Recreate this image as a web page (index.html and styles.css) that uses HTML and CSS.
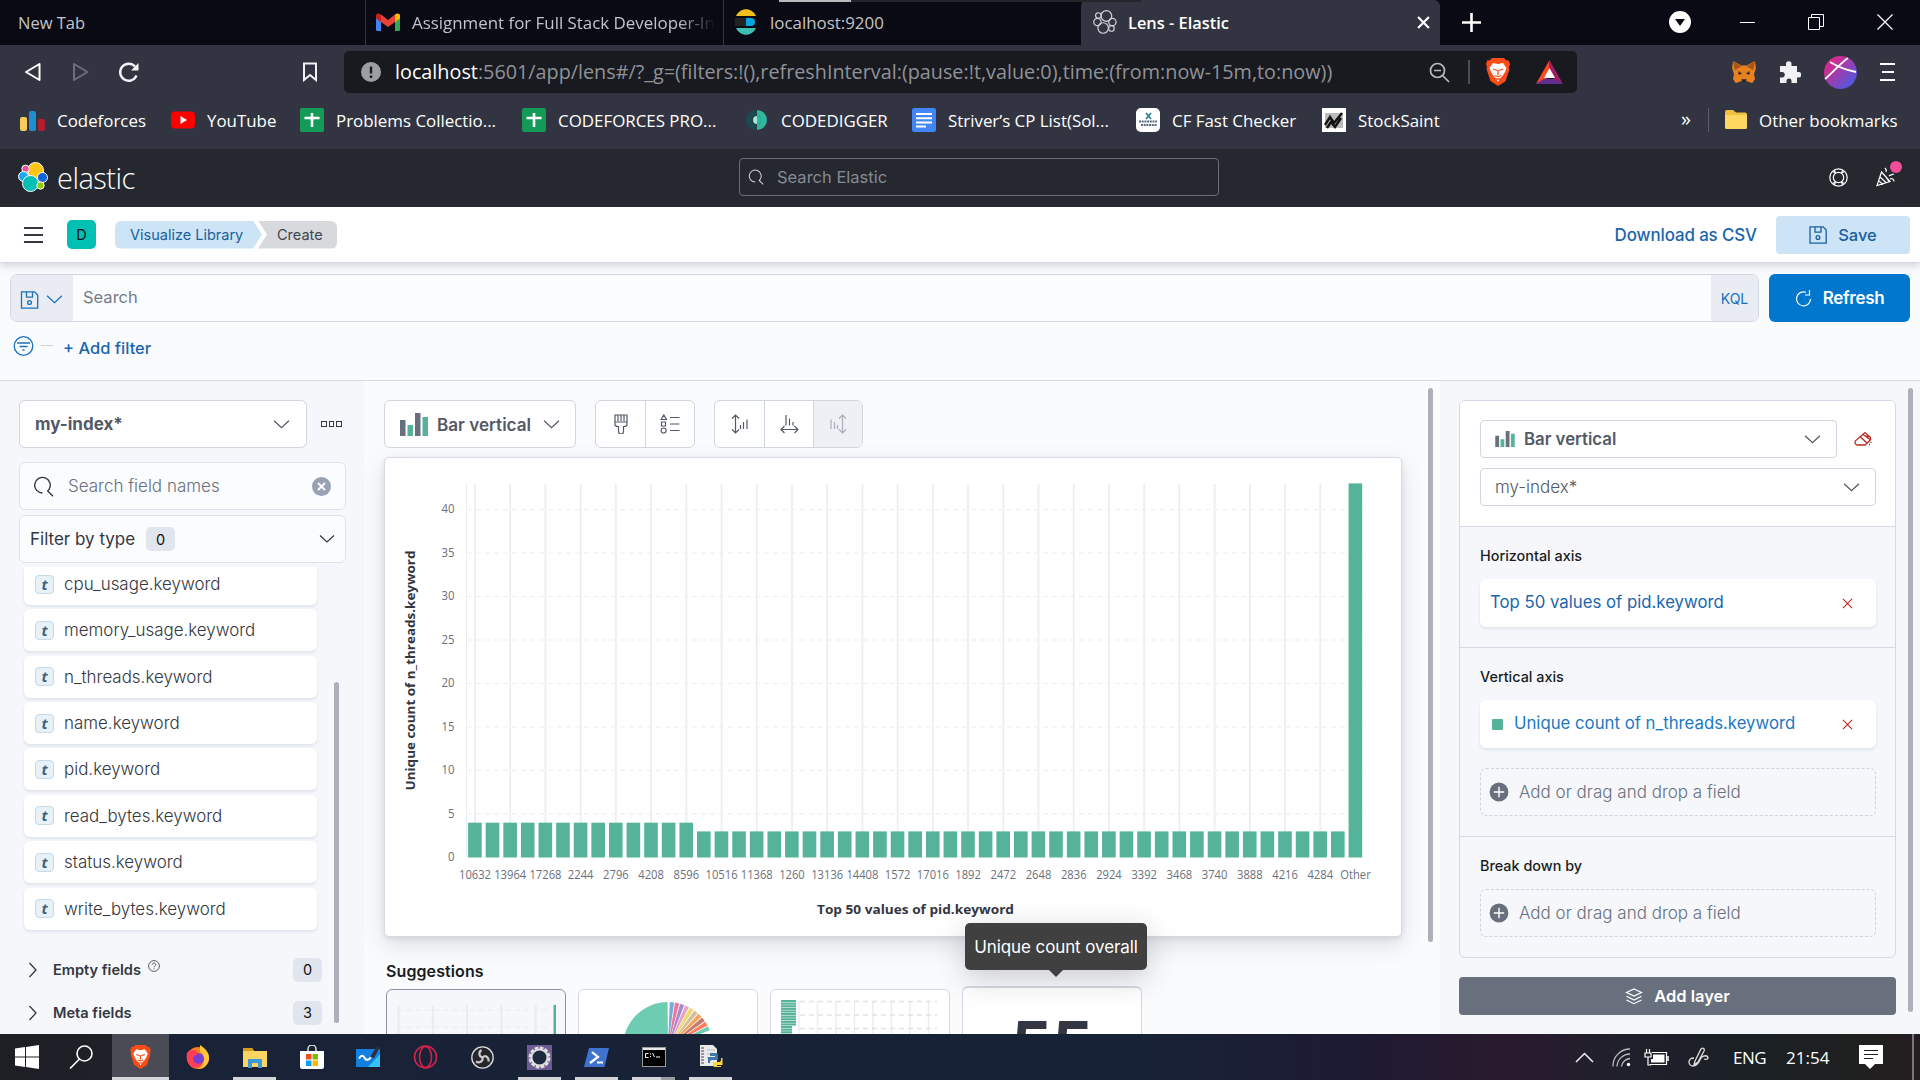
FILE: index.html
```html
<!DOCTYPE html>
<html lang="en">
<head>
<meta charset="utf-8">
<title>Lens - Elastic</title>
<link rel="stylesheet" href="styles.css">
</head>
<body>
<svg class="sprite" width="0" height="0">
  <symbol id="down" viewBox="0 0 16 16"><path d="M1 4.500 8 11l7-6.500" fill="none" stroke="currentColor" stroke-width="1.200"/></symbol>
  <symbol id="mag" viewBox="0 0 20 20"><path d="M9 16.200A7.400 7.400 0 1 1 15.400 12.600L14 14.200l5 5" fill="none" stroke="currentColor" stroke-width="1.300"/></symbol>
  <symbol id="bars" viewBox="0 0 28 23"><path d="M0 7h5.500v16H0zM15 0h5.500v23H15z" fill="#69707d"/><path d="M7.500 12H13v11H7.500zM22.500 4H28v19h-5.500z" fill="#54b399"/></symbol>
  <symbol id="save" viewBox="0 0 18 18"><path d="M1 .8h13.200l3 3.200v13.200H1zM6 1v5.200h6V1" fill="none" stroke="currentColor" stroke-width="1.300"/><circle cx="9" cy="11.500" r="1.900" fill="none" stroke="currentColor" stroke-width="1.300"/></symbol>
  <symbol id="sheet" viewBox="0 0 24 24"><rect width="24" height="24" rx="2" fill="#139a57"/><path d="M12 5v14M4.500 10h15" stroke="#fff" stroke-width="2.600"/></symbol>
  <symbol id="lion" viewBox="0 0 24 28"><path d="m6 0 12 0 2.500 2.500 2-.3 1.500 4-1 3 .5 2-4 12L12 28 4.500 23 .5 11 1 9 0 6l1.500-4 2 .4z" fill="#fb4b16"/><path d="m7 5 5 1 5-1 3.500 5-1.500 4-2.500 4-2.500 2.500L12 24l-2-3.500L7.500 18 5 14l-1.500-4z" fill="#fff"/><path d="m7 11 4 1.500M17 11l-4 1.500M12 12v5M8.500 17.500l3.500 1 3.500-1M10 21h4" stroke="#fb4b16" stroke-width="1.300" fill="none"/></symbol>
  <symbol id="cross" viewBox="0 0 12 12"><path d="m1 1 10 10M11 1 1 11" fill="none" stroke="currentColor" stroke-width="1.200"/></symbol>
  <symbol id="plus" viewBox="0 0 20 20"><circle cx="10" cy="10" r="9.400" fill="#69707d"/><path d="M10 4.800v10.400M4.800 10h10.400" stroke="#fff" stroke-width="1.400"/></symbol>
  <symbol id="right" viewBox="0 0 10 16"><path d="m1.500 1 6.500 7-6.500 7" fill="none" stroke="#343741" stroke-width="1.300"/></symbol>
</svg>

<div class="tabs">
  <div class="tab first">New Tab</div>
  <div class="tab">
    <svg width="24" height="18" viewBox="0 0 24 18"><path d="M0 3v13.500A1.500 1.500 0 0 0 1.500 18H5V6z" fill="#4285f4"/><path d="M24 3v13.500a1.500 1.500 0 0 1-1.500 1.500H19V6z" fill="#34a853"/><path d="M5 1.500 12 7l7-5.500V9l-7 5-7-5z" fill="#ea4335"/><path d="M0 3C0 0 3 0 5 1.500V9L0 5.500z" fill="#c5221f"/><path d="M24 3c0-3-3-3-5-1.500V9l5-3.500z" fill="#fbbc04"/></svg>
    <span class="fade">Assignment for Full Stack Developer-In</span>
  </div>
  <div class="tab plain">
    <svg width="24" height="26" viewBox="0 0 24 26"><path d="M2 7C6-2 18-2 22 7z" fill="#f0bf1a"/><path d="M1 9h15a4 4 0 0 1 0 8H1z" fill="#222"/><path d="M12 9h5a4 4 0 0 1 0 8h-5z" fill="#07a5de"/><path d="M2 19c4 9 16 9 20 0z" fill="#3ebeb0"/></svg>
    <span>localhost:9200</span>
  </div>
  <div class="tab active">
    <svg width="24" height="24" viewBox="0 0 26 26" fill="none" stroke="#cfd2d8" stroke-width="1.300"><circle cx="14.500" cy="6.500" r="5.800"/><circle cx="5.800" cy="6" r="3"/><circle cx="4.800" cy="13" r="4"/><circle cx="21" cy="13" r="4"/><circle cx="11" cy="19.500" r="5.700"/><circle cx="20" cy="20" r="3"/></svg>
    <span>Lens - Elastic</span>
    <svg class="end" width="13" height="13" viewBox="0 0 12 12"><path d="m1 1 10 10M11 1 1 11" stroke="#fff" stroke-width="2"/></svg>
  </div>
  <svg class="newtab" width="19" height="19" viewBox="0 0 19 19"><path d="M9.500 0v19M0 9.500h19" stroke="#fff" stroke-width="2.600"/></svg>
  <div class="winbtns">
    <svg width="22" height="22" viewBox="0 0 22 22"><circle cx="11" cy="11" r="11" fill="#fff"/><path d="M6 8h10l-5 7z" fill="#0a0a14"/></svg>
    <svg width="15" height="15" viewBox="0 0 15 15"><path d="M0 7.500h15" stroke="#fff"/></svg>
    <svg width="16" height="16" viewBox="0 0 16 16" fill="none" stroke="#fff"><path d="M.5 3.500h11v12H.5zM3.500 3.500v-3h12v12h-4"/></svg>
    <svg width="16" height="16" viewBox="0 0 16 16"><path d="m.5.5 15 15M15.500.5l-15 15" stroke="#fff" stroke-width="1.200"/></svg>
  </div>
  <i class="drag"></i>
</div>

<div class="toolbar">
  <svg width="18" height="20" viewBox="0 0 18 20"><path d="M15.500 2v16L2 10z" fill="none" stroke="#fff" stroke-width="2" stroke-linejoin="round"/></svg>
  <svg width="18" height="20" viewBox="0 0 18 20"><path d="M2 2v16l13.500-8z" fill="none" stroke="#6c6f79" stroke-width="2" stroke-linejoin="round"/></svg>
  <svg width="21" height="21" viewBox="0 0 21 21"><path d="M18.500 13.500A8.500 8.500 0 1 1 17 4.500" fill="none" stroke="#f3f3f5" stroke-width="2.400"/><path d="M20.500 1v7.500H13z" fill="#f3f3f5"/></svg>
  <svg width="16" height="20" viewBox="0 0 16 20"><path d="M2 1.500h12v16.500l-6-5-6 5z" fill="none" stroke="#f3f3f5" stroke-width="2"/></svg>
  <div class="url">
    <svg width="20" height="20" viewBox="0 0 20 20"><circle cx="10" cy="10" r="10" fill="#9c9ea5"/><path d="M10 4.500v7M10 13.500v2.500" stroke="#181a20" stroke-width="2.400"/></svg>
    <span class="addr"><b>localhost</b>:5601/app/lens#/?_g=(filters:!(),refreshInterval:(pause:!t,value:0),time:(from:now-15m,to:now))</span>
    <svg width="21" height="21" viewBox="0 0 21 21" fill="none" stroke="#b9bbc0" stroke-width="1.700"><circle cx="8.500" cy="8.500" r="7"/><path d="m13.500 13.500 6.500 6.500M5 8.500h7"/></svg>
    <i class="vbar"></i>
    <svg width="24" height="28"><use href="#lion"/></svg>
    <svg width="27" height="24" viewBox="0 0 27 24"><path d="M13.500 0 0 24l13.500-7z" fill="#ff4724"/><path d="M13.500 0 27 24l-13.500-8z" fill="#9e1f63"/><path d="M0 24h27l-7.500-5h-12z" fill="#662d91"/><path d="m13.500 8 5.500 10H8z" fill="#fff"/></svg>
  </div>
  <div class="exts">
    <svg width="24" height="22" viewBox="0 0 26 24"><path d="m1 0 9 5h6l9-5 1 8-2 6 1 6-3 4-6-2h-6l-6 2-3-4 1-6-2-6z" fill="#e8821e"/><path d="m1 0 9 6-7 4zM25 0l-9 6 7 4z" fill="#a8541a"/><path d="m7 11 4 3-4 1zM19 11l-4 3 4 1zM10 20h6l-1 3h-4z" fill="#2a2a2e"/></svg>
    <svg width="22" height="23" viewBox="0 0 22 23"><path d="M1 5h6V3a2.700 2.700 0 0 1 5.500 0v2H18v6h1.500a2.700 2.700 0 0 1 0 5.500H18V22h-5.500v-2a2.500 2.500 0 0 0-5 0v2H1v-5.500h2a2.700 2.700 0 0 0 0-5.500H1z" fill="#f1f1f3"/></svg>
    <svg width="33" height="33" viewBox="0 0 33 33"><defs><linearGradient id="av" x1="0" y1="0" x2="1" y2="1"><stop offset=".2" stop-color="#d52a8d"/><stop offset=".8" stop-color="#5a55d8"/></linearGradient></defs><circle cx="16.500" cy="16.500" r="16.500" fill="url(#av)"/><path d="M1 23C9 16 18 6 24 2M6 6c8 5 16 8 26 10" fill="none" stroke="#fff" stroke-width="1.800"/></svg>
    <svg width="15" height="20" viewBox="0 0 15 20"><path d="M0 2h15M2 10h12M0 18h15" stroke="#fff" stroke-width="2.200"/></svg>
  </div>
</div>

<div class="bookmarks">
  <div><svg width="25" height="24" viewBox="0 0 25 24"><rect y="9" width="7" height="14" rx="2" fill="#f7c95a"/><rect x="9" y="3" width="7" height="20" rx="2" fill="#1f8fd0" /><rect x="18" y="11" width="7" height="12" rx="2" fill="#b21f2d"/></svg>Codeforces</div>
  <div><svg width="24" height="24" viewBox="0 0 24 24"><rect y="3.500" width="24" height="17" rx="4" fill="#f00"/><path d="m9.500 8 6.500 4-6.500 4z" fill="#fff"/></svg>YouTube</div>
  <div><svg width="24" height="24"><use href="#sheet"/></svg>Problems Collectio...</div>
  <div><svg width="24" height="24"><use href="#sheet"/></svg>CODEFORCES PRO...</div>
  <div><svg width="24" height="24" viewBox="0 0 24 24"><path d="M11 2a10 10 0 0 0 0 20V16a4 4 0 0 1 0-8z" fill="#1a4a52"/><path d="M12 2a10 10 0 0 1 0 20V16a4 4 0 0 0 0-8z" fill="#2fb8a0"/><path d="M12 8a4 4 0 0 0 0 8z" fill="#9fe8dc"/><path d="M12 8a4 4 0 0 1 0 8z" fill="#2fb8a0"/></svg>CODEDIGGER</div>
  <div><svg width="24" height="24" viewBox="0 0 24 24"><rect width="24" height="24" rx="2" fill="#4285f4"/><path d="M4 6h16M4 10.200h16M4 14.400h16M4 18.600h10" stroke="#fff" stroke-width="2"/></svg>Striver’s CP List(Sol...</div>
  <div><svg width="24" height="24" viewBox="0 0 24 24"><rect width="24" height="24" rx="5" fill="#fff"/><path d="m10 5 5 6M15 5l-5 6" stroke="#33818f" stroke-width="1.800"/><path d="M3 13.500h18M5 17h16" stroke="#566a80" stroke-width="1.800" stroke-dasharray="2 .7"/></svg>CF Fast Checker</div>
  <div><svg width="24" height="24" viewBox="0 0 24 24"><rect width="24" height="24" fill="#fff"/><path d="M3 5h18v15H3z" fill="#bbb"/><path d="m3 17 5-8 4 6 8-10M5 20l4-6 4 5 6-9" fill="none" stroke="#111" stroke-width="2.400"/></svg>StockSaint</div>
  <div class="more">»</div>
  <div class="other"><svg width="24" height="20" viewBox="0 0 24 20"><path d="M1 2a2 2 0 0 1 2-2h6l3 2.500h9a2 2 0 0 1 2 2V17a2 2 0 0 1-2 2H3a2 2 0 0 1-2-2z" fill="#f2c23e"/><path d="M1 5h22v12a2 2 0 0 1-2 2H3a2 2 0 0 1-2-2z" fill="#ffd761"/></svg>Other bookmarks</div>
</div>

<header class="ehead">
  <svg width="30" height="30" viewBox="0 0 30 30" stroke="#fff" stroke-width="1"><circle cx="17.500" cy="8.500" r="8" fill="#fec514"/><circle cx="7.500" cy="6.800" r="3.700" fill="#f04e98"/><circle cx="5.500" cy="14.500" r="5" fill="#1ba9f5"/><circle cx="24.500" cy="15.500" r="5" fill="#0b64dd"/><circle cx="12.500" cy="21.500" r="8" fill="#00bfb3"/><circle cx="22.500" cy="23.500" r="3.700" fill="#93c90e"/></svg>
  <span class="brand">elastic</span>
  <div class="gsearch"><svg width="16" height="16"><use href="#mag"/></svg>Search Elastic</div>
  <svg class="help" width="19" height="19" viewBox="0 0 19 19" fill="none" stroke="#fff" stroke-width="1.200"><circle cx="9.500" cy="9.500" r="8.700"/><circle cx="9.500" cy="9.500" r="5.200"/><path d="M3.500 3.500 6.500 5M5.500 2l1 3.500M15.500 3.500 12.500 5M13.500 2l-1 3.500M3.500 15.500l3-1.500M5.500 17l1-3.500M15.500 15.500l-3-1.500M13.500 17l-1-3.500"/></svg>
  <div class="news"><svg width="20" height="20" viewBox="0 0 20 20" fill="none" stroke="#fff" stroke-width="1.200"><path d="M5.500 5 1 18.500 14 14.500zM4 10l6.500 6M3 14l4 3.500M8 7.500l5 7M10 5c1-2 0-3-1-4M13 9c2-2 3-1 5-2M14 12c2-1 4 0 4 2.500"/></svg><i></i></div>
</header>

<nav class="enav">
  <div class="burger"><i></i><i></i><i></i></div>
  <div class="space">D</div>
  <div class="crumbs"><span class="c1">Visualize Library</span><span class="c2">Create</span></div>
  <a class="csv">Download as CSV</a>
  <div class="savebtn"><svg width="18" height="18"><use href="#save"/></svg>Save</div>
</nav>

<section class="query">
  <div class="qrow">
    <div class="qbox">
      <div class="qpre"><svg width="19" height="18"><use href="#save"/></svg><svg width="17" height="17"><use href="#down"/></svg></div>
      <div class="qin">Search</div>
      <div class="kql">KQL</div>
    </div>
    <div class="refresh"><svg width="17" height="17" viewBox="0 0 17 17" fill="none" stroke="#fff" stroke-width="1.200"><path d="M15.500 9A7 7 0 1 1 11 2.300M14.500 0v5H10"/></svg>Refresh</div>
  </div>
  <div class="frow">
    <svg width="21" height="20" viewBox="0 0 21 20" fill="none" stroke="#1a70b8" stroke-width="1.300"><circle cx="10.500" cy="10" r="9.300"/><path d="M4 7h13M6.500 10.500h8M9.500 14h2"/></svg>
    <i></i><a>+ Add filter</a>
  </div>
</section>

<main class="lens">
  <aside class="left">
    <div class="lrow"><div class="lsel"><b>my-index*</b><svg width="17" height="17"><use href="#down"/></svg></div>
      <div class="dots"><i></i><i></i><i></i></div></div>
    <div class="box fsearch"><svg width="21" height="21"><use href="#mag"/></svg><span>Search field names</span><i class="clr"><svg width="9" height="9" viewBox="0 0 9 9"><path d="m1 1 7 7M8 1 1 8" stroke="#fff" stroke-width="2"/></svg></i></div>
    <div class="box ftype"><span>Filter by type</span><em class="badge">0</em><svg width="16" height="16"><use href="#down"/></svg></div>
    <div class="flist">
      <div class="fields">
        <div class="field"><i>t</i>cpu_usage.keyword</div>
        <div class="field"><i>t</i>memory_usage.keyword</div>
        <div class="field"><i>t</i>n_threads.keyword</div>
        <div class="field"><i>t</i>name.keyword</div>
        <div class="field"><i>t</i>pid.keyword</div>
        <div class="field"><i>t</i>read_bytes.keyword</div>
        <div class="field"><i>t</i>status.keyword</div>
        <div class="field"><i>t</i>write_bytes.keyword</div>
        <div class="acc"><svg width="10" height="16"><use href="#right"/></svg><b>Empty fields</b><svg class="q" width="12" height="12" viewBox="0 0 12 12" fill="none" stroke="#343741" stroke-width=".8"><circle cx="6" cy="6" r="5.400"/><path d="M4.300 4.700c0-2.200 3.400-2.200 3.400 0C7.700 6 6 6 6 7.300M6 8.300v1"/></svg><em class="badge">0</em></div>
        <div class="acc"><svg width="10" height="16"><use href="#right"/></svg><b>Meta fields</b><em class="badge">3</em></div>
      </div>
      <i class="thumb"></i>
    </div>
  </aside>

  <section class="center">
    <div class="work">
      <div class="ctools">
        <div class="ctype"><svg width="28" height="23"><use href="#bars"/></svg><b>Bar vertical</b><svg width="17" height="17"><use href="#down"/></svg></div>
        <div class="grp">
          <span><svg width="14" height="20" viewBox="0 0 14 20" fill="none" stroke="#535966" stroke-width="1.200"><path d="M1 1h12v9.500c0 1.500-2 2-3.500 2v5a2 2 0 0 1-5 0v-5C3 12.500 1 12 1 10.500zM1 8h12M4 1v6M7 1v6M10 1v6"/></svg></span>
          <span><svg width="20" height="20" viewBox="0 0 20 20" fill="none" stroke="#535966" stroke-width="1.200"><path d="M1 5.500 3.800 1l2.700 4.500zM1.500 8h4v4h-4zM10 3.500h9.500M10 10h9.500M10 16.500h9.500"/><circle cx="3.600" cy="16.500" r="2.500"/></svg></span>
        </div>
        <div class="grp">
          <span><svg width="17" height="20" viewBox="0 0 17 20" fill="none" stroke="#535966" stroke-width="1.200"><path d="M4.500 1.500v17M1 4.500l3.500-3.500L8 4.500M1 15.500 4.500 19 8 15.500M9.500 15v-4M12.500 15V8M16 15V5.500"/></svg></span>
          <span><svg width="19" height="20" viewBox="0 0 19 20" fill="none" stroke="#535966" stroke-width="1.200"><path d="M1.500 15.500h16M4.500 12 1 15.500 4.500 19M14.500 12l3.500 3.500-3.500 3.500M6 11.500V1M9.500 11.500V4.500M13 11.500V8"/></svg></span>
          <span class="off"><svg width="17" height="20" viewBox="0 0 17 20" fill="none" stroke="#a9aeb9" stroke-width="1.200"><path d="M12.500 1.500v17M9 4.500 12.500 1 16 4.500M9 15.500l3.500 3.500 3.500-3.500M7.500 15v-4M4.500 15V8M1 15V5.500"/></svg></span>
        </div>
      </div>
      <div class="panel"><svg id="chart" width="1016" height="478" viewBox="385 458 1016 478"></svg></div>
      <h3>Suggestions</h3>
      <div class="sugg">
        <div class="card sel"><svg id="mini" width="177" height="50" viewBox="0 0 177 50"></svg></div>
        <div class="card"><svg id="pie" width="177" height="50" viewBox="0 0 177 50"></svg></div>
        <div class="card"><svg id="hbar" width="177" height="50" viewBox="0 0 177 50"></svg></div>
        <div class="card hov">55</div>
      </div>
      <div class="tip">Unique count overall</div>
    </div>
    <i class="thumb"></i>
  </section>

  <aside class="right">
    <div class="cfg">
      <div class="layer">
        <div class="lhead">
          <div class="rrow"><div class="rsel"><svg width="20" height="16"><use href="#bars"/></svg><b>Bar vertical</b><svg class="end" width="17" height="17"><use href="#down"/></svg></div>
            <svg class="eraser" width="18" height="16" viewBox="0 0 18 16" fill="none" stroke="#bd271e" stroke-width="1.300"><path d="M8 14H3c-3-1.500-2.500-4 0-5.500L11 1.500l5.500 5V9L11 14H8M6.500 6l6.500 6M9 3.500l7 5M11 5l5 .5M15 13.500h1M17 11v1"/></svg></div>
          <div class="rsel full">my-index*<svg class="end" width="17" height="17"><use href="#down"/></svg></div>
        </div>
        <div class="grpx"><h4>Horizontal axis</h4>
          <div class="dim">Top 50 values of pid.keyword<svg width="11" height="11"><use href="#cross"/></svg></div></div>
        <div class="grpx"><h4>Vertical axis</h4>
          <div class="dim uc"><i></i>Unique count of n_threads.keyword<svg width="11" height="11"><use href="#cross"/></svg></div>
          <div class="drop"><svg width="20" height="20"><use href="#plus"/></svg>Add or drag and drop a field</div></div>
        <div class="grpx"><h4>Break down by</h4>
          <div class="drop"><svg width="20" height="20"><use href="#plus"/></svg>Add or drag and drop a field</div></div>
      </div>
      <div class="addlayer"><svg width="18" height="17" viewBox="0 0 18 17" fill="none" stroke="#fff" stroke-width="1.200"><path d="m9 1 7.500 3.500L9 8 1.500 4.500zM1.500 8.300 9 12l7.500-3.700M1.500 12 9 15.700l7.500-3.700"/></svg>Add layer</div>
    </div>
    <i class="thumb"></i>
  </aside>
</main>

<footer class="task">
  <div class="t win"><svg width="24" height="24" viewBox="0 0 24 24"><path d="m0 3.500 10-1.400v9.400H0zM11 2l13-2v11.500H11zM0 12.500h10v9.400L0 20.500zM11 12.500h13V24l-13-2z" fill="#fff"/></svg></div>
  <div class="t srch"><svg width="24" height="24" viewBox="0 0 24 24" fill="none" stroke="#fff" stroke-width="1.600"><circle cx="15.500" cy="8.500" r="7.500"/><path d="M10.500 14 1 23.500"/></svg></div>
  <div class="t on act"><svg width="21" height="24"><use href="#lion"/></svg></div>
  <div class="t"><svg width="24" height="24" viewBox="0 0 24 24"><circle cx="12" cy="13" r="11" fill="#ff7a1f"/><path d="M14 0c6 4 9 8 9 13a11 11 0 0 1-11 11C20 20 20 9 14 7z" fill="#ffc93a"/><circle cx="12" cy="14" r="6" fill="#7a3fd0"/><path d="M1 8c2-3 4-4 5-3 3 0 6 2 5 5-3 0-4 2-4 4 1 5 6 6 10 3-2 6-10 8-14 2C1 16 0 12 1 8z" fill="#ff3d55"/></svg></div>
  <div class="t on"><svg width="24" height="21" viewBox="0 0 24 21"><path d="M0 1h9l2 3h13v16H0z" fill="#fcd462"/><path d="M0 1h9l2 3H0z" fill="#d99b1c"/><path d="M5 21v-9h14v9h-4v-5H9v5z" fill="#3a9bdc"/></svg></div>
  <div class="t"><svg width="24" height="24" viewBox="0 0 24 24"><path d="M8 7V4a4 4 0 0 1 8 0v3" fill="none" stroke="#ddd" stroke-width="1.500"/><path d="M0 6h24v16a2 2 0 0 1-2 2H2a2 2 0 0 1-2-2z" fill="#fff"/><path d="M6 9h5.500v5.500H6z" fill="#f25022"/><path d="M12.500 9H18v5.500h-5.500z" fill="#7fba00"/><path d="M6 15.500h5.500V21H6z" fill="#00a4ef"/><path d="M12.500 15.500H18V21h-5.500z" fill="#ffb900"/></svg></div>
  <div class="t"><svg width="25" height="22" viewBox="0 0 25 22"><rect y="3" width="24" height="18" fill="#1280e0"/><path d="M12 21 24 8v13z" fill="#35c3f3"/><path d="M3 12.500c3-5 5-2 6 0s4 2 6-1.500" fill="none" stroke="#fff" stroke-width="2"/><path d="m14 11 7-11 3 1-6 11z" fill="#2b2f3c"/></svg></div>
  <div class="t"><svg width="25" height="24" viewBox="0 0 25 24" fill="none" stroke="#d3224f" stroke-width="1.600"><circle cx="12.500" cy="12" r="11"/><ellipse cx="12.500" cy="12" rx="6" ry="10.500"/></svg></div>
  <div class="t"><svg width="23" height="23" viewBox="0 0 23 23"><circle cx="11.500" cy="11.500" r="10.700" fill="#25262b" stroke="#ddd" stroke-width="1.300"/><path d="M11.500 11.500C7.500 10.500 7.500 6 10.500 4M11.500 11.500c3-3 6.500 0 6 4M11.500 11.500c1 4-3.500 6-6.500 4" fill="none" stroke="#c9c9c9" stroke-width="2.200"/></svg></div>
  <div class="t on"><svg width="25" height="25" viewBox="0 0 25 25"><rect width="25" height="25" fill="#6d5b93"/><circle cx="12.500" cy="12.500" r="9" fill="none" stroke="#dedede" stroke-width="4" stroke-dasharray="3.500 1.200"/><circle cx="12.500" cy="12.500" r="8" fill="#1e2a40" stroke="#dedede" stroke-width="2"/></svg></div>
  <div class="t on"><svg width="25" height="19" viewBox="0 0 25 19"><path d="M5 0h20l-4.500 19H0z" fill="#3e74d0"/><path d="m8 4 6 5-8 6M13 14.500h6" fill="none" stroke="#fff" stroke-width="2.200"/></svg></div>
  <div class="t on split"><svg width="24" height="20" viewBox="0 0 24 20"><rect x=".5" y=".5" width="23" height="19" fill="#000" stroke="#9a9a9a"/><path d="M1 2h22" stroke="#e8e8e8" stroke-width="2"/><path d="M6.500 6.500h-3v4h3M8.500 6.500v1M8.500 9v1M10.500 6l2 4M14 10h4" stroke="#fff" fill="none"/></svg></div>
  <div class="t on"><svg width="24" height="24" viewBox="0 0 24 24"><path d="M1 0h13l4 4v17H1z" fill="#e9e9e9"/><path d="M2 3h3M2 6h3M2 9h3M2 12h3M2 15h3M2 18h3" stroke="#444"/><path d="M8 5h8M8 9h5M8 13h3" stroke="#bbb"/><path d="M11 8h6a2 2 0 0 1 2 2v5h-6a2 2 0 0 0-2 2v1H9v-6h7v-1h-5z" fill="#3b77a8"/><path d="M22 22h-6a2 2 0 0 1-2-2v-3h6a2 2 0 0 0 2-2v-2h1.500v7h-6v1H22z" fill="#ffd43b"/></svg></div>
  <div class="tray">
    <svg width="19" height="11" viewBox="0 0 19 11"><path d="m1 10 8.500-8.500L18 10" fill="none" stroke="#eee" stroke-width="1.500"/></svg>
    <svg width="19" height="19" viewBox="0 0 19 19" fill="none" stroke="#bbb" stroke-width="1.300"><path d="M1 18.500A17 17 0 0 1 18 1M5 18.500A13 13 0 0 1 18 6M9.500 18.500A9 9 0 0 1 18 10.500"/><circle cx="16.500" cy="16.500" r="1.700" fill="#fff" stroke="none"/></svg>
    <svg width="25" height="17" viewBox="0 0 25 17"><path d="M1 4h6v4H1zM2.500 0v4M5.500 0v4M4 8v8h3M8 3.500h14.500v12H6" fill="none" stroke="#fff" stroke-width="1.200"/><path d="M9 5.500h11.500v8H7V10h2z" fill="#fff"/><path d="M24 7v5" stroke="#fff" stroke-width="1.500"/></svg>
    <svg width="21" height="20" viewBox="0 0 21 20" fill="none" stroke="#ddd" stroke-width="1.300"><path d="m7 14 6-12c2-2 4 0 3 2l-6 11-4 3zM6 11c-7 0-6 8-1 8 4 0 6-4 8-8 2-3 7-3 7 0 0 1-2 2-4 1"/></svg>
    <span class="eng">ENG</span><span class="clock">21:54</span>
    <svg width="24" height="24" viewBox="0 0 24 24"><path d="M0 0h24v19h-8l-5 5-5-5H0z" fill="#fff"/><path d="M5 5.500h14M5 9.500h14M5 13.500h9" stroke="#1b1f26" stroke-width="1.200"/></svg>
    <i></i>
  </div>
</footer>
<script src="script.js"></script>
</body>
</html>
```
FILE: styles.css
```css
*{box-sizing:border-box}
body{margin:0;width:1920px;height:1080px;overflow:hidden;display:flex;flex-direction:column;font-family:Inter,"Liberation Sans",sans-serif;font-size:17px;color:#343741;background:#fafbfd}
svg{display:block;flex:none}
i,em{font-style:normal}
.sprite{position:absolute}
.end{margin-left:auto}

/* browser chrome */
.tabs,.toolbar,.bookmarks,.task{font-family:"Open Sans","Noto Sans",sans-serif}
.tabs{flex:0 0 45px;position:relative;background:#0a0a14;display:flex;align-items:center;color:#c3c4c8;font-size:16.900px}
.tab{display:flex;align-items:center;height:45px;width:358px;padding:0 8px 1px 10px;gap:12px;white-space:nowrap;border-left:1px solid #32343f}
.tab.first{width:365px;padding-left:18px;border:0;font-size:16.500px}
.fade{flex:1;overflow:hidden;-webkit-mask-image:linear-gradient(90deg,#000 88%,transparent)}
.tab.active{width:359px;background:#323541;color:#fff;font-weight:600;gap:11px;padding:0 10px 1px 12px;border:0;border-radius:6px 6px 0 0;font-size:16.400px}
.newtab{margin-left:22px}
.winbtns{margin-left:auto;display:flex;align-items:center;gap:53px;padding:0 27px 1px 0}
.winbtns svg:first-child{margin-right:-4px}
.drag{position:absolute;left:779px;top:0;width:362px;height:2px;background:linear-gradient(90deg,#b9b9bd 72px,#24252b 72px)}
.toolbar{flex:0 0 54px;background:#323541;display:flex;align-items:center;padding:0 25px 0 24px}
.toolbar>svg:nth-child(1){margin-right:30px}
.toolbar>svg:nth-child(2){margin-right:28px}
.toolbar>svg:nth-child(3){margin-right:163px}
.url{margin-left:26px;width:1233px;height:42px;border-radius:5px;background:#181a20;display:flex;align-items:center;padding:0 14px 0 17px;font-size:19.800px;color:#909298;white-space:nowrap}
.addr{margin-left:14px;flex:1;padding-bottom:1px}
.addr b{font-weight:400;color:#fff}
.vbar{width:2px;height:24px;margin:0 16px 0 18px;background:#4b4d55}
.url svg:last-child{margin-left:26px}
.exts{margin-left:auto;display:flex;align-items:center;gap:23px}
.bookmarks{flex:0 0 50px;background:#323541;display:grid;grid-template-columns:151px 129px 222px 223px 167px 224px 186px 1fr 27px 192px;padding:0 20px 8px 20px;align-items:center;color:#fff;font-size:16.900px;white-space:nowrap}
.bookmarks div{display:flex;align-items:center;gap:12px}
.bookmarks .more{font-size:20px;padding-bottom:4px}
.bookmarks .other{border-left:1px solid #5b5e69;padding-left:15px;height:24px;gap:11px}

/* Elastic header */
.ehead{flex:0 0 58px;background:#25282f;display:flex;align-items:center;padding:0 19px 2px 18px}
.brand{font:300 29px "Open Sans","Noto Sans",sans-serif;color:#fff;margin-left:9px;width:78px;letter-spacing:-.5px}
.gsearch{margin-left:604px;width:480px;height:38px;border:1px solid #6a6e77;border-radius:4px;display:flex;align-items:center;gap:13px;padding-left:8px;color:#868a93;font-size:16.500px}
.gsearch svg{color:#cfd2d8}
.help{margin-left:auto}
.news{margin-left:28px;position:relative;width:25px}
.news i{position:absolute;left:14px;top:-6px;width:12px;height:12px;border-radius:50%;background:#f04e98}
.enav{flex:0 0 56px;background:#fff;border-bottom:1px solid #d3d7de;box-shadow:0 3px 8px rgba(100,105,120,.25);z-index:2;display:flex;align-items:center;padding:0 10px 0 24px}
.burger{width:19px;display:grid;gap:5px}
.burger i{height:2px;background:#343741}
.space{margin:0 19px 0 24px;width:29px;height:29px;border-radius:5px;background:#00bfb3;color:#111;font-size:14.500px;display:grid;place-items:center}
.crumbs{display:flex;height:28px;line-height:28px;font-size:14.500px}
.c1{width:147px;padding-left:15px;border-radius:6px 0 0 6px;background:#cce4f5;color:#1a5f9e;clip-path:polygon(0 0,138px 0,100% 50%,138px 100%,0 100%)}
.c2{width:79px;margin-left:-4px;padding-left:19px;border-radius:0 6px 6px 0;background:#d8d9dc;color:#404350;clip-path:polygon(0 0,100% 0,100% 100%,0 100%,9px 50%)}
.csv{margin-left:auto;color:#1a66ad;font-size:16.900px;font-weight:500;letter-spacing:-.1px}
.savebtn{margin-left:19px;width:134px;height:38px;border-radius:4px;background:#cce4f5;color:#1a5f9e;font-weight:500;font-size:16.500px;display:flex;align-items:center;justify-content:center;gap:11px}
.query{flex:0 0 118px;padding:11px 10px 0;border-bottom:1px solid #d3dae6}
.qrow{display:flex;gap:10px}
.qbox{flex:1;height:48px;border:1px solid #d0d8e4;border-radius:7px;overflow:hidden;display:flex;align-items:center;background:#fbfcfd}
.qpre{width:62px;height:100%;background:#e9ecf3;color:#1a70b8;display:flex;align-items:center;gap:7px;padding:3px 0 0 9px}
.qin{flex:1;padding:0 0 2px 10px;color:#757b88;font-size:16.500px}
.kql{width:47px;height:100%;background:#e9ecf3;color:#1a70b8;font-size:14px;display:grid;place-items:center}
.refresh{width:141px;height:48px;border-radius:6px;background:#0077cc;color:#fff;font-weight:600;font-size:17px;letter-spacing:-.3px;display:flex;align-items:center;justify-content:center;gap:11px}
.frow{display:flex;align-items:center;margin-top:13px;padding-left:3px}
.frow svg{margin-top:-2px}
.frow i{width:12px;height:1px;background:#cbd3e0;margin:-3px 10px 0 7px}
.frow a{color:#1a66ad;font-weight:500;font-size:16.500px;padding-top:3px}

/* Lens */
.lens{flex:0 0 653px;display:flex;overflow:hidden}
.left{width:364px;background:#f5f7fb;padding:19px 18px 0 19px;display:flex;flex-direction:column}
.lrow{display:flex;align-items:center}
.lsel{width:288px;height:48px;border:1px solid #d0d6e0;border-radius:6px;background:#fff;display:flex;align-items:center;justify-content:space-between;padding:0 16px 0 15px;color:#535966;font-size:17px}
.dots{display:flex;gap:2px;margin-left:14px}
.dots i{width:5.500px;height:6px;border:1.500px solid #343741}
.box{height:48px;border:1px solid #dde3ec;border-radius:6px;background:#fbfcfe;display:flex;align-items:center;font-size:17px}
.fsearch{margin-top:14px;padding:0 14px 0 13px;color:#69707d}
.fsearch svg{color:#343741}
.fsearch span{margin-left:14px;font-weight:300}
.clr{margin-left:auto;width:19px;height:19px;border-radius:50%;background:#98a2b3;display:grid;place-items:center}
.ftype{margin-top:5px;padding:0 10px}
.ftype svg{margin-left:auto}
.badge{width:29px;height:24px;border-radius:5px;background:#e0e5ee;color:#111;font-size:14.500px;display:grid;place-items:center}
.ftype .badge{margin-left:11px}
.flist{flex:1;overflow:hidden;display:flex;margin-top:4px}
.fields{width:303px;margin-top:-4px;padding-left:5px}
.field{width:293px;height:42px;margin-bottom:4.360px;border-radius:6px;background:#fff;box-shadow:0 2px 3px rgba(140,150,170,.2);display:flex;align-items:center;gap:10px;padding-left:11px;font-weight:300;font-size:16.950px;color:#343741}
.field i{width:19px;height:19px;border:1px solid #c4d8e6;border-radius:4px;background:#e8f1f7;color:#3c6480;font:italic 700 15px/16px "Open Sans","Noto Sans",sans-serif;text-align:center}
.acc{display:flex;align-items:center;height:24px;padding-left:4px;margin-bottom:19px;font-size:14.600px}
.field+.acc{margin-top:28px}
.acc b{margin-left:15px;font-weight:600}
.acc .badge{margin-left:auto}
.q{margin:-7px 0 0 7px}
.thumb{width:5px;border-radius:3px;background:#abb0ba}
.left .thumb{margin:115px 0 11px 12px}
.center{width:1076px;display:flex;padding-left:20px}
.work{width:1018px;padding-top:19px;position:relative}
.center .thumb{margin:7px 0 92px 26px}
.ctools{display:flex;gap:19px}
.ctype{width:192px;height:48px;border:1px solid #d0d6e0;border-radius:6px;background:#fff;display:flex;align-items:center;padding:0 15px;gap:9px;color:#535966;font-size:17.100px}
.ctype svg:last-child{margin-left:auto}
.ctype b,.rsel b{font-weight:600}
.grp{display:flex;height:48px;border:1px solid #d0d6e0;border-radius:6px;background:#fff;overflow:hidden}
.grp span{width:49px;display:grid;place-items:center}
.grp span+span{border-left:1px solid #d0d6e0}
.grp .off{background:#eef0f5}
.panel{margin-top:9px;height:480px;border:1px solid #d5dae3;border-radius:5px;background:#fff;box-shadow:0 8px 22px rgba(100,105,120,.2),0 2px 5px rgba(100,105,120,.15)}
#chart{font-family:"Open Sans","Noto Sans",sans-serif}
.work h3{margin:24px 0 0 2px;font-size:16px;line-height:20px;font-weight:600;color:#1a1c21;letter-spacing:.1px}
.sugg{display:flex;gap:12px;margin:8px 0 0 2px}
.card{width:180px;height:90px;border:1px solid #d3d8e2;border-radius:6px;background:#fff}
.card.sel{background:#f5f7fa;border-color:#8a92a3}
.card.hov{margin-top:-3px;border-top-width:2px;padding-top:18px;text-align:center;font-weight:700;font-size:64px;line-height:1.210;color:#343741}
.tip{position:absolute;left:581px;top:542px;width:182px;height:47px;border-radius:5px;background:#404040;color:#fff;font-size:17px;letter-spacing:-.1px;display:grid;place-items:center;box-shadow:0 8px 30px rgba(60,60,70,.25)}
.tip::after{content:"";position:absolute;left:83px;top:46px;border:8px solid transparent;border-top-color:#404040;border-bottom:0}
.right{width:480px;background:#f5f7fb;display:flex;padding:19px 7px 0 19px}
.right .thumb{margin:-12px 0 22px 12px}
.cfg{width:437px}
.layer{border:1px solid #d3dae6;border-radius:6px;overflow:hidden}
.lhead{background:#fff;height:126px;padding:19px 19px 0 20px;border-bottom:1px solid #d3dae6}
.rrow{display:flex;align-items:center}
.rsel{width:357px;height:38px;border:1px solid #d0d6e0;border-radius:4px;display:flex;align-items:center;gap:9px;padding:0 15px 0 14px;color:#535966;font-size:16.800px}
.rsel.full{width:396px;margin-top:10px;font-size:17px;font-weight:300}
.rsel .end{margin-left:auto}
.eraser{margin-left:17px}
.grpx{padding:20px 19px 20px 20px}
.grpx+.grpx{border-top:1px solid #d3dae6}
h4{margin:0;font-size:14.400px;line-height:18px;font-weight:500;color:#1a1c21}
.dim{margin-top:14px;height:48px;border-radius:6px;background:#fff;box-shadow:0 2px 3px rgba(140,150,170,.2);display:flex;align-items:center;padding:0 23px 2px 10px;color:#1a66ad;font-size:16.750px}
.dim svg{color:#bd271e;margin:3px 0 0 auto}
.dim.uc i{width:11px;height:11px;border-radius:1px;background:#54b399;margin:2px 11px 0 2px}
.uc{color:#1a78c4}
.drop{margin-top:20px;height:48px;border:1px dashed #ccd3e0;border-radius:6px;display:flex;align-items:center;gap:10px;padding-left:8px;color:#69707d;font-weight:300;font-size:17px}
h4+.drop{margin-top:14px}
.addlayer{margin-top:19px;height:38px;border-radius:4px;background:#69707d;color:#fff;font-weight:600;font-size:16.500px;display:flex;align-items:center;justify-content:center;gap:11px}

/* taskbar */
.task{flex:0 0 46px;display:flex;background:linear-gradient(90deg,#1e1f25 0,#1f2028 110px,#192236 170px,#182236 1150px,#1d1b33 1350px,#2a1a2e 1500px,#20202c 1620px,#1a2024 1750px,#21201f 1880px,#261d22)}
.t{width:57px;display:flex;align-items:center;justify-content:center;position:relative}
.t.win{width:54px}
.t.srch{width:58px;padding-right:4px}
.on::after{content:"";position:absolute;left:7px;right:7px;bottom:0;height:3px;background:#d3d5d9}
.act{background:#4a4b55}
.act::after{left:0;right:0}
.split::after{background:linear-gradient(90deg,#d3d5d9 29px,#9a9ca2 29px)}
.tray{margin-left:auto;display:flex;align-items:center;color:#fff;font-size:17px;padding-right:6px}
.tray svg:nth-child(1){margin-left:-2px}
.tray svg:nth-child(2){margin-left:18px}
.tray svg:nth-child(3){margin-left:13px}
.tray svg:nth-child(4){margin-left:19px}
.eng{margin-left:24px;width:53px;letter-spacing:-.5px}
.clock{width:73px}
.tray i{width:2px;height:46px;margin-left:29px;background:#777}
```
FILE: script.js
```js
const NS = 'http://www.w3.org/2000/svg';
function add(parent, tag, attrs, text) {
  const el = document.createElementNS(NS, tag);
  for (const k in attrs) el.setAttribute(k, attrs[k]);
  if (text !== undefined) el.textContent = text;
  if (attrs.textLength) el.setAttribute('lengthAdjust', 'spacingAndGlyphs');
  parent.appendChild(el);
}

// Main bar chart
const chart = document.getElementById('chart');
const x0 = 475, step = 17.61, base = 857.5, unit = 8.7;
const labels = ['10632', '13964', '17268', '2244', '2796', '4208', '8596', '10516', '11368', '1260', '13136', '14408', '1572', '17016', '1892', '2472', '2648', '2836', '2924', '3392', '3468', '3740', '3888', '4216', '4284', 'Other'];
for (let v = 0; v <= 40; v += 5) {
  const y = base - v * unit;
  if (v) add(chart, 'path', { d: `M467 ${y}H1364`, stroke: '#eceef1', 'stroke-width': 1.2, 'stroke-dasharray': '5 4' });
  add(chart, 'text', { x: 454.5, y: y + 3.5, 'text-anchor': 'end', 'font-size': 12.3, fill: '#69707d', textLength: v < 10 ? 6.5 : 13 }, v);
}
add(chart, 'path', { d: 'M466.500 484V857', stroke: '#eaecf0' });
labels.forEach((t, i) => {
  const x = x0 + i * 2 * step;
  add(chart, 'path', { d: `M${x} 484V857`, stroke: '#edeff2', 'stroke-width': 2 });
  add(chart, 'text', { x, y: 879, 'text-anchor': 'middle', 'font-size': 12.3, fill: '#69707d', textLength: t === 'Other' ? 30.5 : t.length * 6.4 }, t);
});
for (let i = 0; i < 51; i++) {
  const v = i === 50 ? 43 : i < 13 ? 4 : 3;
  add(chart, 'rect', { x: x0 + i * step - 6.9, y: base - v * unit, width: 13.6, height: v * unit, fill: '#54b399' });
}
add(chart, 'text', { x: 915.5, y: 914, 'text-anchor': 'middle', 'font-size': 13.2, 'font-weight': 700, fill: '#343741', textLength: 197 }, 'Top 50 values of pid.keyword');
add(chart, 'text', { transform: 'translate(415 670.500) rotate(-90)', 'text-anchor': 'middle', 'font-size': 13.2, 'font-weight': 700, fill: '#343741', textLength: 240 }, 'Unique count of n_threads.keyword');

// Suggestion thumbnails
const mini = document.getElementById('mini');
for (let i = 0; i < 5; i++) add(mini, 'path', { d: `M${11.5 + i * 34.3} 15V50`, stroke: '#e9ebef', 'stroke-width': 2 });
[20, 37].forEach(y => add(mini, 'path', { d: `M11 ${y}H160`, stroke: '#e9ebef', 'stroke-dasharray': '5 4' }));
add(mini, 'rect', { x: 166.5, y: 15, width: 2.5, height: 40, fill: '#54b399' });

const pie = document.getElementById('pie');
const cx = 89, cy = 57, r = 45;
const at = a => `${cx + r * Math.sin(a)} ${cy - r * Math.cos(a)}`;
add(pie, 'path', { d: `M${cx} ${cy}L${at(-1.6)}A${r} ${r} 0 0 1 ${at(-.01)}Z`, fill: '#6dccb1' });
['#79aad9', '#ee789d', '#a987d1', '#e4a6c7', '#f1d86f', '#d2c0a0', '#f5a35c', '#c47c6c', '#ff7e62', '#6dccb1'].forEach((c, i) => {
  const a = .04 + i * .117;
  add(pie, 'path', { d: `M${cx} ${cy}L${at(a)}A${r} ${r} 0 0 1 ${at(a + .095)}Z`, fill: c });
});

const hbar = document.getElementById('hbar');
for (let i = 0; i < 8; i++) add(hbar, 'path', { d: `M${28 + i * 18.5} 11V50`, stroke: '#ebedf1', 'stroke-width': 1.5 });
[11.5, 25, 38.5].forEach(y => add(hbar, 'path', { d: `M29 ${y}H166`, stroke: '#dfe2e8', 'stroke-width': 1.5, 'stroke-dasharray': '5 4' }));
for (let i = 0; i < 16; i++) add(hbar, 'rect', { x: 10, y: 10 + i * 2.6, width: i < 10 ? 15 : 11, height: 2.1, fill: '#54b399' });
```
